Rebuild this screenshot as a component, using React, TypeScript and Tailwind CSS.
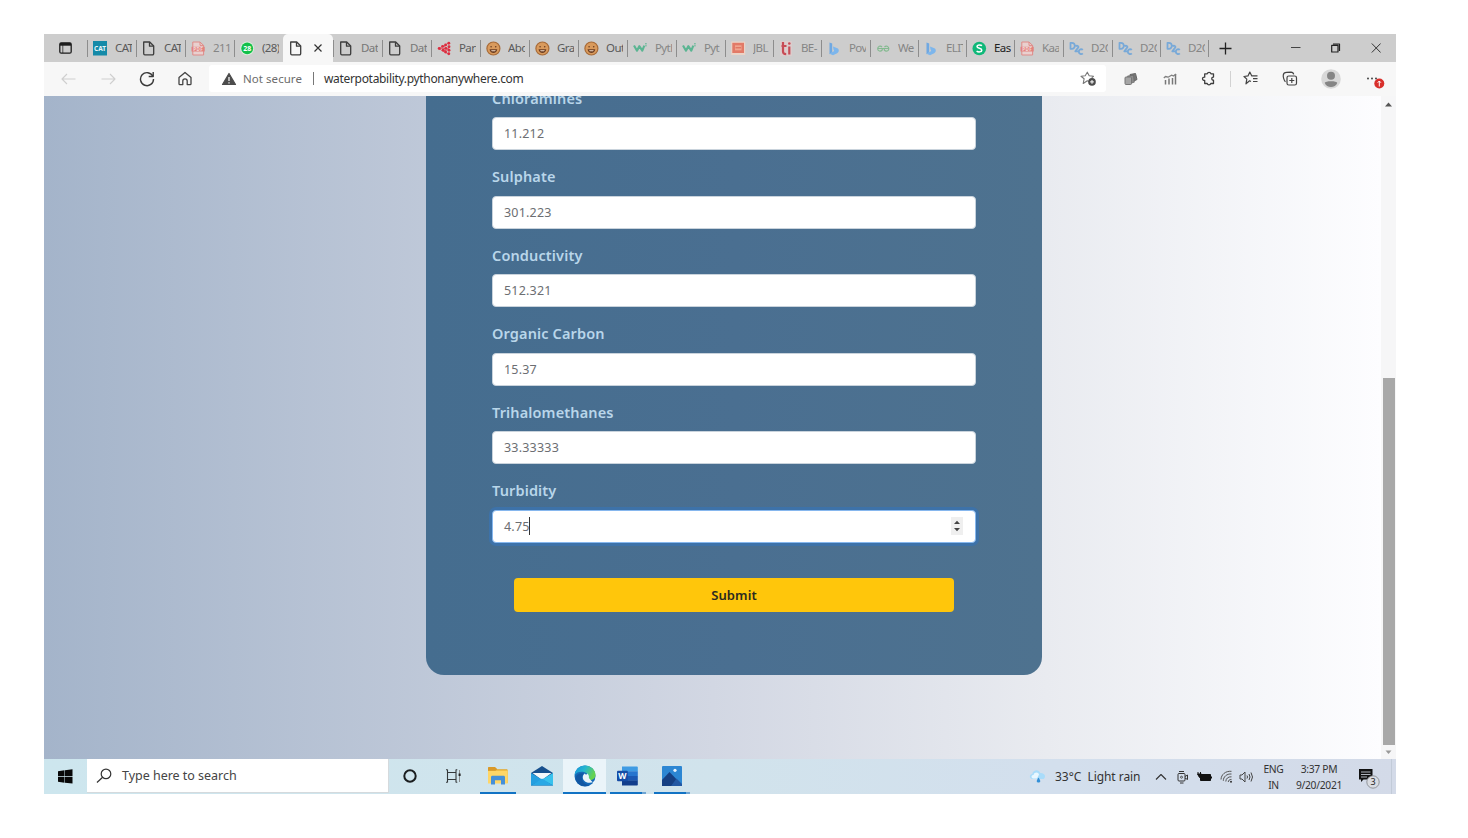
import React from "react";

type TabInfo = { icon: string; title: string; width: string; shade: string };

const dark = "text-[#5a5a5a]";
const dim = "text-[#858585]";

const tabsBefore: TabInfo[] = [
  { icon: "cat", title: "CAT", width: "w-[49px]", shade: dark },
  { icon: "page", title: "CAT", width: "w-[49px]", shade: dark },
  { icon: "pdf", title: "2110", width: "w-[49px]", shade: dim },
  { icon: "chat", title: "(28)", width: "w-[49px]", shade: dark },
];

const tabsAfter: TabInfo[] = [
  { icon: "page", title: "Dat", width: "w-[49px]", shade: "text-[#777]" },
  { icon: "page", title: "Dat", width: "w-[49px]", shade: "text-[#777]" },
  { icon: "graph", title: "Pari", width: "w-[49px]", shade: dark },
  { icon: "face", title: "Abo", width: "w-[49px]", shade: dark },
  { icon: "face", title: "Gra", width: "w-[49px]", shade: dark },
  { icon: "face", title: "Out", width: "w-[49px]", shade: dark },
  { icon: "w3", title: "Pyth", width: "w-[49px]", shade: dim },
  { icon: "w3", title: "Pyt", width: "w-[49px]", shade: dim },
  { icon: "jbl", title: "JBL", width: "w-[48px]", shade: dim },
  { icon: "ti", title: "BE-", width: "w-[48px]", shade: dim },
  { icon: "bing", title: "Pov", width: "w-[49px]", shade: dim },
  { icon: "gfg", title: "We", width: "w-[48px]", shade: dim },
  { icon: "bing", title: "ELIT", width: "w-[48px]", shade: dim },
  { icon: "s", title: "Eas", width: "w-[48px]", shade: "text-[#222]" },
  { icon: "pdf", title: "Kaa", width: "w-[49px]", shade: dim },
  { icon: "d2c", title: "D2C", width: "w-[49px]", shade: dim },
  { icon: "d2c", title: "D2C", width: "w-[48px]", shade: dim },
  { icon: "d2c", title: "D2C", width: "w-[48px]", shade: dim },
];

const fields = [
  { label: "Chloramines", value: "11.212" },
  { label: "Sulphate", value: "301.223" },
  { label: "Conductivity", value: "512.321" },
  { label: "Organic Carbon", value: "15.37" },
  { label: "Trihalomethanes", value: "33.33333" },
  { label: "Turbidity", value: "4.75", focused: true },
];

function Svg({ w, h, children }: { w: number; h: number; children: React.ReactNode }) {
  return (
    <svg width={w} height={h} viewBox={`0 0 ${w} ${h}`} fill="none" className="block shrink-0" strokeLinejoin="round">
      {children}
    </svg>
  );
}

function Favicon({ name }: { name: string }) {
  switch (name) {
    case "cat":
      return (
        <Svg w={15} h={15}>
          <rect width="14" height="14.5" fill="#158aa8" />
          <text x="7" y="10" textAnchor="middle" fontSize="6.5" fontWeight="700" fill="#e8f5f9" textLength="12">CAT</text>
        </Svg>
      );
    case "page":
      return (
        <Svg w={15} h={15}>
          <path d="M1.700 1h6l4 4v7.600a1.200 1.200 0 0 1-1.200 1.200H2.900a1.200 1.200 0 0 1-1.200-1.200Z" stroke="#3c3c3c" strokeWidth="1.3" />
          <path d="M7.500 1.200v4h4" stroke="#3c3c3c" strokeWidth="1.3" />
        </Svg>
      );
    case "pdf":
      return (
        <Svg w={15} h={15}>
          <path d="M1.8 1h7.200l3.600 3.400v9.600H1.8Z" fill="#e9d0cf" stroke="#df8b88" strokeWidth="1" />
          <path d="M9 1v3.400h3.600" stroke="#df8b88" />
          <rect x=".5" y="5.800" width="13.200" height="4.700" fill="#e2827e" />
          <text x="7.100" y="9.800" textAnchor="middle" fontSize="4.500" fontWeight="700" fill="#f4d8d6" textLength="9.500">PDF</text>
        </Svg>
      );
    case "chat":
      return (
        <Svg w={15} h={15}>
          <circle cx="7.2" cy="7.4" r="6.9" fill="#d9eedb" />
          <circle cx="7.2" cy="7.4" r="5.9" fill="#12c04a" />
          <text x="7.2" y="9.9" textAnchor="middle" fontSize="7" fontWeight="700" fill="#fff">28</text>
        </Svg>
      );
    case "graph":
      return (
        <Svg w={15} h={15}>
          <path d="M2 7.500 6.500 5l5-3M2 7.500h10M2 7.500l4.500 3 5 2.500M6.500 5l5 3-5 2.500" stroke="#e26a75" strokeWidth="1" />
          {[[2.2, 7.5], [5.6, 5.4], [6.2, 9.2], [8.6, 3.9], [8.8, 7.4], [8.6, 11], [11.8, 2.3], [12, 5.8], [12, 9.300], [11.8, 12.7]].map(([x, y]) => (
            <circle key={`${x}-${y}`} cx={x} cy={y} r="1.45" fill="#dc2d3f" />
          ))}
        </Svg>
      );
    case "face":
      return (
        <Svg w={15} h={15}>
          <circle cx="7.400" cy="7.500" r="6.500" fill="#d99a5c" stroke="#a86a36" strokeWidth="1.200" />
          <path d="M3.500 8.300h7.800c-.3 2.400-1.900 3.600-3.900 3.600S3.800 10.700 3.500 8.300Z" fill="#6b3d22" />
          <path d="M5 9.300h4.800l-.8.900H5.800Z" fill="#f2ddc8" />
          <circle cx="5.100" cy="5.700" r=".8" fill="#6b3d22" />
          <circle cx="9.700" cy="5.700" r=".8" fill="#6b3d22" />
        </Svg>
      );
    case "w3":
      return (
        <Svg w={15} h={15}>
          <path d="m1 4.500 3 5.200 2.300-4.500 3 4.500 2-5" stroke="#5bb592" strokeWidth="2.100" />
          <path d="M12 2.800h1.800M12.200 4.800h1.500" stroke="#5bb592" />
        </Svg>
      );
    case "jbl":
      return (
        <Svg w={15} h={15}>
          <rect x=".2" y=".5" width="14" height="13.500" fill="#ebd3c6" />
          <rect x="1.300" y="1.800" width="11.700" height="10.200" fill="#e27a67" />
          <rect x="4" y="4.300" width="6.500" height="5" fill="#f0a58f" />
          <path d="M4.500 6.800h5.500" stroke="#d96450" strokeWidth="1" />
        </Svg>
      );
    case "ti":
      return (
        <Svg w={15} h={15}>
          <rect x="1" y="0" width="12" height="15" rx="1" fill="#dccccc" />
          <path d="M4 1v9.500c0 2 1.200 2.600 3.200 2.600M2.500 5h5M10.300 5.500v8" stroke="#c84b55" strokeWidth="2.200" />
          <circle cx="10.300" cy="2.500" r="1.300" fill="#c84b55" />
        </Svg>
      );
    case "bing":
      return (
        <Svg w={15} h={15}>
          <path d="M2.500 1.500 5.200 2.400v8.800l-2.700 2Z" fill="#6fa8e2" />
          <path d="m6 5.500 5 2.100c1.400 1.400 1 3.600-.8 4.600l-4.200 2-3.500-1.500 4.700-2.600-.7-1.600Z" fill="#7db6ec" />
        </Svg>
      );
    case "gfg":
      return (
        <Svg w={15} h={15}>
          <path d="M1.500 7.500H13M6 6C4.500 4.200 1.700 5.200 1.700 7.700s2.800 3.200 4.500 1.400V7.500M8.500 6C10 4.200 12.800 5.200 12.800 7.700s-2.800 3.200-4.500 1.400V7.500" stroke="#84ba90" strokeWidth="1.200" />
        </Svg>
      );
    case "s":
      return (
        <Svg w={15} h={15}>
          <circle cx="7.300" cy="7.500" r="6.800" fill="#0fb879" />
          <path d="M10 4.700c-1.500-1.100-5-1.100-5 .8 0 2.200 4.800 1.400 4.800 3.700 0 2-3.500 2.100-5.200.9" stroke="#fff" strokeWidth="1.500" />
        </Svg>
      );
    default:
      return (
        <Svg w={15} h={15}>
          <path d="M1.500 1.800v6h1.300c4 0 4-6 0-6ZM6.800 5.500c.8-1.400 3-.8 2.600.7L6.300 10.400h3.200" stroke="#78a9d8" strokeWidth="1.800" />
          <path d="M13.800 8.900c-1.400-1.300-4-.7-4 1.700s2.600 3.200 4 1.800" stroke="#78a9d8" strokeWidth="1.900" />
        </Svg>
      );
  }
}

function Tab({ tab }: { tab: TabInfo }) {
  return (
    <div className={`${tab.width} flex h-full shrink-0 items-center`}>
      <div className="h-[17px] w-px shrink-0 bg-[#8d8d8d]" />
      <div className="ml-[5px] w-[15px] shrink-0">
        <Favicon name={tab.icon} />
      </div>
      <div className={`ml-[7px] w-[17px] overflow-hidden text-[11.5px] leading-4 tracking-[-0.6px] whitespace-nowrap ${tab.shade}`}>
        {tab.title}
      </div>
    </div>
  );
}

function TabStrip() {
  return (
    <div className="flex h-7 shrink-0 bg-[#cdcdcd]">
      <div className="flex w-[43px] shrink-0 items-center pl-[15px]">
        <Svg w={13} h={12}>
          <rect x=".8" y=".8" width="11.400" height="10.400" rx="1.500" stroke="#1d1d1d" strokeWidth="1.300" />
          <path d="M1 2.300h11" stroke="#1d1d1d" strokeWidth="2.800" />
          <path d="M3.800 3v8" stroke="#1d1d1d" strokeWidth=".7" />
        </Svg>
      </div>
      {tabsBefore.map((t, i) => (
        <Tab key={i} tab={t} />
      ))}
      <div className="flex w-[50px] shrink-0 items-center rounded-t-[5px] bg-[#f7f7f7] pl-[6px]">
        <Favicon name="page" />
        <div className="ml-[9px]">
          <Svg w={10} h={10}>
            <path d="m1.500 1.500 7 7m0-7-7 7" stroke="#333" strokeWidth="1.200" />
          </Svg>
        </div>
      </div>
      {tabsAfter.map((t, i) => (
        <Tab key={i} tab={t} />
      ))}
      <div className="flex w-8 shrink-0 items-center">
        <div className="h-[17px] w-px bg-[#8d8d8d]" />
        <div className="ml-[10px]">
          <Svg w={13} h={13}>
            <path d="M6.500.5v12M.5 6.500h12" stroke="#222" strokeWidth="1.300" />
          </Svg>
        </div>
      </div>
      <div className="flex flex-1 items-center justify-end gap-[30px] pr-[15px]">
        <Svg w={10} h={10}>
          <path d="M0 4.500h9.500" stroke="#444" />
        </Svg>
        <Svg w={10} h={10}>
          <path d="M.700 2.300h6.300V9H.700ZM2 1h6.500v7" stroke="#222" strokeWidth="1.200" />
        </Svg>
        <Svg w={10} h={10}>
          <path d="m.8.500 8.800 9m0-9-8.800 9" stroke="#333" />
        </Svg>
      </div>
    </div>
  );
}

function Slot({ width, children }: { width: string; children: React.ReactNode }) {
  return <div className={`${width} flex h-full shrink-0 items-center justify-center`}>{children}</div>;
}

function Toolbar() {
  return (
    <div className="flex h-[34px] shrink-0 items-center bg-[#f7f7f7] pb-px pl-1">
      <Slot width="w-10">
        <Svg w={15} h={12}>
          <path d="M14.500 6H1M6 1 1 6l5 5" stroke="#cfcfcf" strokeWidth="1.100" />
        </Svg>
      </Slot>
      <Slot width="w-10">
        <Svg w={15} h={12}>
          <path d="M.5 6H14M9 1l5 5-5 5" stroke="#cfcfcf" strokeWidth="1.100" />
        </Svg>
      </Slot>
      <Slot width="w-[37px]">
        <Svg w={16} h={16}>
          <path d="M13.800 5.200A6.500 6.500 0 1 0 14.500 8" stroke="#3a3a3a" strokeWidth="1.400" />
          <path d="M14.200 1v4.500H9.700" stroke="#3a3a3a" strokeWidth="1.400" />
        </Svg>
      </Slot>
      <Slot width="w-[39px]">
        <Svg w={14} h={15}>
          <path d="M1 6.600 7 1.400l6 5.200v6.100a.9.900 0 0 1-.9.900H9.200V10a2.200 2.200 0 0 0-4.400 0v3.600H1.900a.9.900 0 0 1-.9-.9Z" stroke="#444" strokeWidth="1.300" />
        </Svg>
      </Slot>
      <div className="ml-[5px] flex h-[27px] w-[897px] shrink-0 items-center rounded-[3px] bg-white pl-3">
        <Svg w={16} h={14}>
          <path d="M8 1.500 14.500 12.500h-13Z" fill="#4c4c4c" stroke="#4c4c4c" strokeWidth="1.200" />
          <path d="M8 5v4M8 10.200v1.400" stroke="#fff" strokeWidth="1.200" />
        </Svg>
        <div className="ml-[6px] w-[70px] text-[11.5px] leading-4 tracking-[0.05px] whitespace-nowrap text-[#6c6c6c]">Not secure</div>
        <div className="h-[13px] w-px bg-[#777]" />
        <div className="ml-[10px] flex-1 text-[12px] leading-4 tracking-[-0.32px] text-[#333]">waterpotability.pythonanywhere.com</div>
        <div className="pr-[9px]">
          <Svg w={17} h={16}>
            <path d="M9.500 10.800 7.300 9.800 3.200 12.500l.9-4.700L1 5.300l4.200-.5L7.300 1.200l1.900 3.600 4.300.5-1.800 1.500" stroke="#777" strokeWidth="1.100" />
            <circle cx="12" cy="10.900" r="3.800" fill="#4c4c4c" />
            <path d="M12 9v3.800M10.100 10.900h3.800" stroke="#fff" />
          </Svg>
        </div>
      </div>
      <div className="ml-1 flex h-full">
        <Slot width="w-[42px]">
          <Svg w={14} h={14}>
            <path d="m6 2.500 5.500-1L13 7.500 8 10Z" fill="#777" stroke="#666" />
            <path d="m3.500 4 6-.8.800 7-4.500 1.300Z" fill="#8c8c8c" stroke="#666" strokeWidth=".7" />
            <rect x="1" y="5" width="6.500" height="7.500" rx="1" fill="#a5a5a5" stroke="#777" />
          </Svg>
        </Slot>
        <Slot width="w-9">
          <Svg w={14} h={14}>
            <path d="M2.500 12.500V8M6 12.500V6.500M9.500 12.500V6M12.500 12.500V2" stroke="#777" strokeWidth="1.500" />
            <path d="m.8 6 1.700-1.500L5 5.200 8.500 3.200l2 .8 2.500-2" stroke="#808080" strokeWidth="1.300" />
          </Svg>
        </Slot>
        <Slot width="w-10">
          <Svg w={15} h={15}>
            <path d="M5 2.800h1.200a2 2 0 0 1 3.800 0h2.500v3.300c-2.300-.2-2.300 3.300 0 3.100v3.300H9.800a1.900 1.900 0 0 1-3.600 0H3.700V9.400c-2.900.2-2.900-3.600 0-3.300V2.800Z" stroke="#3f3f3f" strokeWidth="1.300" />
          </Svg>
        </Slot>
        <Slot width="w-1">
          <div className="h-4 w-px bg-[#d2d2d2]" />
        </Slot>
        <Slot width="w-[38px]">
          <Svg w={16} h={15}>
            <path d="M8 10.500 6.600 9.800 3 12.800l.8-4.700L1 5.500l4-.6L6.800 1l2 3.900h5.700M10 7.700h4.500M10 10.500h4.500" stroke="#444" strokeWidth="1.200" />
          </Svg>
        </Slot>
        <Slot width="w-10">
          <Svg w={16} h={16}>
            <rect x="5" y="5" width="9.500" height="9" rx="1.800" stroke="#444" strokeWidth="1.200" />
            <path d="M9.800 7v5M7.300 9.500h5M3.500 10.800C1.800 9.500 1 5.500 1.300 3.800c.3-2 1.600-2.400 3.300-2.500l4.400-.2c1.700 0 2.400.9 2.700 2.300" stroke="#444" strokeWidth="1.200" />
          </Svg>
        </Slot>
        <Slot width="w-[42px]">
          <Svg w={20} h={20}>
            <circle cx="10" cy="10" r="9.800" fill="#d8d8d8" />
            <circle cx="10" cy="6.700" r="4" fill="#858585" />
            <path d="M3.800 14c0-2.200 12.400-2.200 12.400 0-.8 2.800-3.500 4-6.200 4s-5.400-1.200-6.200-4Z" fill="#858585" />
          </Svg>
        </Slot>
        <Slot width="w-11">
          <Svg w={22} h={20}>
            <circle cx="5" cy="9.500" r=".9" fill="#333" />
            <circle cx="9" cy="9.500" r=".9" fill="#333" />
            <circle cx="13" cy="9.500" r=".9" fill="#333" />
            <circle cx="16.300" cy="14.500" r="5" fill="#d8302c" />
            <path d="M16.300 17.500V12m-1.600 1.700 1.600-1.700 1.600 1.700" stroke="#fff" />
          </Svg>
        </Slot>
      </div>
    </div>
  );
}

function Field({ label, value, focused }: { label: string; value: string; focused?: boolean }) {
  return (
    <div className="h-[78.500px] shrink-0">
      <div className="h-[45.500px] pt-[16px] text-[14.5px] leading-5 font-semibold tracking-[0.13px] text-[#b9d6ea]">{label}</div>
      <div
        className={
          focused
            ? "flex h-[33px] items-center rounded-[4px] border border-[#86b7ee] bg-white pr-[12px] pl-[11px] shadow-[0_0_0_3px_#3d72a9]"
            : "flex h-[33px] items-center rounded-[4px] border border-[#c9d3dc] bg-white pr-[12px] pl-[11px]"
        }
      >
        <span className="pt-[1.500px] text-[12.5px] leading-5 tracking-[0.2px] text-[#6c6e72]">{value}</span>
        {focused && (
          <>
            <span className="-ml-px h-[18px] w-px bg-[#333]" />
            <span className="ml-auto flex h-[18px] w-3 items-center justify-center bg-[#efefef]">
              <Svg w={8} h={12}>
                <path d="M1 4 4 .800 7 4ZM1 8l3 3.200L7 8Z" fill="#444" />
              </Svg>
            </span>
          </>
        )}
      </div>
    </div>
  );
}

function Page() {
  return (
    <div className="flex h-[663px] shrink-0 overflow-hidden">
      <div className="flex w-[1337px] shrink-0 justify-center bg-[linear-gradient(90deg,#a4b4ca_0%,#d2d7e3_50%,#e9ebf0_75%,#fdfdff_100%)] pl-[43px]">
        <div className="-mt-[24.500px] flex h-[603.500px] w-[616px] flex-col rounded-b-[18px] bg-[linear-gradient(90deg,#456d8f,#4a6f91_50%,#4e728f)] px-[66px]">
          {fields.map((f) => (
            <Field key={f.label} {...f} />
          ))}
          <button className="mx-[22px] mt-[35px] h-[34px] rounded-[4px] bg-[#ffc60b] text-[13px] leading-5 font-semibold tracking-[0.1px] text-[#2b2a20]">Submit</button>
        </div>
      </div>
      <div className="flex w-[15px] shrink-0 flex-col items-center bg-[#f6f6f7]">
        <div className="flex h-[17px] items-center">
          <Svg w={7} h={5}>
            <path d="M0 4.500 3.500.5 7 4.500Z" fill="#555" />
          </Svg>
        </div>
        <div className="mt-[265px] h-[367px] w-3 bg-[#a8a8a8]" />
        <div className="flex h-[14px] items-center">
          <Svg w={7} h={5}>
            <path d="M.5.5h6l-3 3.500Z" fill="#999" />
          </Svg>
        </div>
      </div>
    </div>
  );
}

function App() {
  return (
    <div className="h-[838px] w-[1468px] overflow-hidden bg-white pt-[34px] pl-[44px] font-['Noto_Sans','Open_Sans',sans-serif]">
      <div className="flex h-[760px] w-[1352px] flex-col overflow-hidden">
        <TabStrip />
        <Toolbar />
        <Page />
        <Taskbar />
      </div>
    </div>
  );
}

function TaskApp({ width, line, stacked, active, children }: { width: string; line?: string; stacked?: boolean; active?: boolean; children?: React.ReactNode }) {
  return (
    <div className={`${width} flex h-full shrink-0 flex-col items-center ${active ? "bg-[#eaf4f9]" : ""}`}>
      <div className="flex flex-1 items-center pt-px">{children}</div>
      <div className="flex h-[2px] justify-center">
        <div className={`h-full ${line ?? "w-0"} bg-[#1273c4]`} />
        {stacked && <div className="h-full w-1 bg-[#6fa5d3]" />}
      </div>
    </div>
  );
}

function Taskbar() {
  return (
    <div className="flex h-[35px] shrink-0 bg-[linear-gradient(90deg,#cde6ee_0%,#d1e3ec_50%,#d3dfed_75%,#d3dae8_100%)]">
      <Slot width="w-[43px]">
        <Svg w={15} h={15}>
          <path d="M0 2.200 6.500 1.300V7H0ZM7 1.200 14.500.2V7H7ZM0 7.700h6.500v6L0 12.800ZM7 7.700h7.500v6.800L7 13.700Z" fill="#080808" />
        </Svg>
      </Slot>
      <div className="flex h-[34px] w-[302px] shrink-0 items-center border-r border-b border-[#d5dadd] bg-white pt-px pl-[9px]">
        <Svg w={17} h={16}>
          <circle cx="10" cy="5.900" r="4.800" stroke="#333" strokeWidth="1.200" />
          <path d="M6.600 9.300 1 14.500" stroke="#333" strokeWidth="1.200" />
        </Svg>
        <div className="ml-[9px] text-[12.5px] leading-5 tracking-[-0.02px] text-[#444]">Type here to search</div>
      </div>
      <TaskApp width="w-[42px]">
        <Svg w={14} h={14}>
          <circle cx="7" cy="7" r="5.700" stroke="#1b1e20" strokeWidth="2" />
        </Svg>
      </TaskApp>
      <TaskApp width="w-11">
        <Svg w={15} h={14}>
          <path d="M1.500 3.500h8.500v7H1.500ZM1.500.5v3m8.500-3v3m-8.500 7v3m8.500-3v3M0 .8h1.500M10 .8h1.300M0 13.200h1.500m8.500 0h1.300" stroke="#34383a" strokeWidth="1.100" />
          <path d="M13.500 1v12" stroke="#777" strokeWidth=".8" />
          <rect x="12.600" y="4.500" width="2" height="2.500" fill="#222" />
        </Svg>
      </TaskApp>
      <TaskApp width="w-[45px]" line="w-9">
        <Svg w={20} h={18}>
          <path d="M0 1.500C0 .5.500 0 1.300 0h5.500L9 2.200h9.500c.8 0 1.200.5 1.200 1.200V16H0Z" fill="#e4a526" />
          <path d="M0 3.500h19.700v13H0Z" fill="#ffd667" />
          <path d="M0 1.500C0 .5.500 0 1.300 0h5.500L9 2l-1.500 1.800H0Z" fill="#d9992a" />
          <path d="M3 17.500v-7.200c0-1 .6-1.500 1.500-1.500h11c.9 0 1.500.5 1.500 1.500v7.200h-4v-4.200H7v4.200Z" fill="#4690d8" />
        </Svg>
      </TaskApp>
      <TaskApp width="w-[43px]">
        <Svg w={22} h={20}>
          <path d="M0 7 11 0l11 7v12.500H0Z" fill="#164f8d" />
          <path d="M1.500 7h19L11 14Z" fill="#f3f8fb" />
          <path d="m0 7 11 6.500L0 19.500Z" fill="#249fe0" />
          <path d="m22 7-11 6.500 11 6Z" fill="#39c2ed" />
          <path d="m11 12.500 11 7H0Z" fill="#29a8e5" />
        </Svg>
      </TaskApp>
      <TaskApp width="w-[43px]" line="w-[43px]" active>
        <Svg w={22} h={22}>
          <defs>
            <linearGradient id="edgeTop" x1="0" y1="0" x2="1" y2=".4">
              <stop stopColor="#1593dc" />
              <stop offset=".5" stopColor="#25b6cf" />
              <stop offset="1" stopColor="#66d34e" />
            </linearGradient>
          </defs>
          <circle cx="11" cy="11" r="10.500" fill="#1469b8" />
          <path d="M.6 10C1.200 4.200 5.600.5 11 .5c6 0 10.500 4.500 10.500 9.200 0 3.500-2.500 5.300-5.500 5.300-2.300 0-3.300-.8-2.500-2 1.300-2 .6-4.800-2.800-5.800C6.500 6 2.500 7.200.6 10Z" fill="url(#edgeTop)" />
          <path d="M10.800 8.500c-2.500 1.700-2.600 5-.5 7.300 2.500 2.600 6.400 2.500 9.800.7l1.900-1.500v3.500l-2 .200" fill="#eaf4f9" />
          <path d="M8 12c-.3 4.500 3 8.200 7.500 8-6 3.200-13-.5-14-6.500C2 9.500 6 7.800 10 8.500 8.800 9.200 8.100 10.500 8 12Z" fill="#1257a2" />
          <path d="M12.500 9.300c1.300 1.200 1.500 2.500.8 3.800" stroke="#eaf4f9" strokeWidth="2.500" />
        </Svg>
      </TaskApp>
      <TaskApp width="w-[43px]" line="w-[32px]" stacked>
        <Svg w={21} h={20}>
          <path d="M5 .5h15a.8.800 0 0 1 .8.800V5.500H5Z" fill="#3f9be3" />
          <path d="M5 5.300h15.800v4.800H5Z" fill="#2775cf" />
          <path d="M5 10h15.800v4.800H5Z" fill="#1c58b3" />
          <path d="M5 14.600h15.800v4.100a.8.800 0 0 1-.8.800H5Z" fill="#123e8c" />
          <rect x="0" y="4.800" width="10.800" height="10.500" rx="1" fill="#164ca5" />
          <text x="5.400" y="13" textAnchor="middle" fontSize="8.500" fontWeight="700" fill="#fff">W</text>
        </Svg>
      </TaskApp>
      <TaskApp width="w-[46px]" line="w-[32px]" stacked>
        <Svg w={20} h={20}>
          <rect width="20" height="20" rx="1" fill="#2c86d3" />
          <path d="m0 14 7.500-8L20 19v1H0Z" fill="#163f82" />
          <path d="m9 20 5.500-7.500L20 18v2Z" fill="#2458a3" />
          <circle cx="13" cy="4.300" r="1.600" fill="#e9f4ff" />
        </Svg>
      </TaskApp>
      <div className="flex flex-1 justify-end">
        <Slot width="w-[22px]">
          <Svg w={18} h={17}>
            <path d="M3.500 11C0 10.500 0 6.500 3.300 6 4 1.500 10 1 11.200 5c4.500-.500 6.500 4 3.300 6Z" fill="#a9dcfa" />
            <path d="M4 10.500c-2.500-1-1.500-3.500.5-3.500C5.500 3.500 9.500 4 10 6.500l-2 4Z" fill="#e9f7ff" />
            <path d="M9.500 9.500c-2 2.700-2.600 5 0 5s2-2.300 0-5Z" fill="#3490d8" />
          </Svg>
        </Slot>
        <div className="ml-[6px] flex w-[95px] shrink-0 items-center pt-px text-[12px] tracking-[-0.05px] whitespace-pre text-[#333]">33°C  Light rain</div>
        <Slot width="w-[22px]">
          <Svg w={12} h={8}>
            <path d="m1 6.500 5-5 5 5" stroke="#333" strokeWidth="1.100" />
          </Svg>
        </Slot>
        <Slot width="w-[22px]">
          <Svg w={12} h={14}>
            <rect x="1" y="3.500" width="7" height="7.500" rx="1" stroke="#333" />
            <path d="M8 6.500 10.500 5v4.500L8 8M2 1.500h5M3 13h3.500" stroke="#333" />
            <circle cx="4.500" cy="7.200" r="1" stroke="#333" strokeWidth=".8" />
          </Svg>
        </Slot>
        <Slot width="w-[21px]">
          <Svg w={15} h={12}>
            <rect x="3.500" y="3.500" width="10" height="6" fill="#111" stroke="#111" />
            <path d="M14.500 5.500v2M1 1v2m2.500-2v2M.5 3h4v2.500l-2 1Z" fill="#111" stroke="#111" />
          </Svg>
        </Slot>
        <Slot width="w-[22px]">
          <Svg w={13} h={13}>
            <path d="M1 9.500C1.200 4.500 5.500.8 11.500 1.300M3.300 10.800c0-4 3.500-7.200 8.200-6.800M5.800 11.500c0-2.800 2.400-5 5.700-4.700M8.300 12c0-1.500 1.200-2.700 3.200-2.600" stroke="#555" />
            <circle cx="11" cy="11.700" r="1" fill="#333" />
          </Svg>
        </Slot>
        <Slot width="w-[19px]">
          <Svg w={15} h={12}>
            <path d="M1 4h2l3-3v10L3 8H1ZM8 4.500q1 1.500 0 3M10 3q2 3 0 6M12 1.500q3 4.500 0 9" stroke="#444" />
          </Svg>
        </Slot>
        <div className="flex w-[35px] shrink-0 flex-col items-center pt-[3px] text-[10.3px] leading-[15.500px] tracking-[-0.3px] text-[#333]">
          <span>ENG</span>
          <span>IN</span>
        </div>
        <div className="flex w-[56px] shrink-0 flex-col items-center pt-[3px] text-[10.3px] leading-[15.500px] tracking-[-0.3px] text-[#333]">
          <span>3:37 PM</span>
          <span>9/20/2021</span>
        </div>
        <div className="flex w-[44px] shrink-0 items-center justify-center pt-1">
          <Svg w={22} h={22}>
            <path d="M1 1h13.500v10.500H5.500L3 14v-2.500H1Z" fill="#111" />
            <path d="M3 4h9.500M3 6.500h9.500M3 9h6" stroke="#d7dde8" strokeWidth=".8" />
            <circle cx="15" cy="14" r="6.200" fill="#d9dce2" stroke="#808489" strokeWidth=".8" />
            <text x="15" y="17.300" textAnchor="middle" fontSize="9" fill="#222">3</text>
          </Svg>
        </div>
        <div className="w-[5px] border-l border-[#c2cbd8]" />
      </div>
    </div>
  );
}

export default App;
